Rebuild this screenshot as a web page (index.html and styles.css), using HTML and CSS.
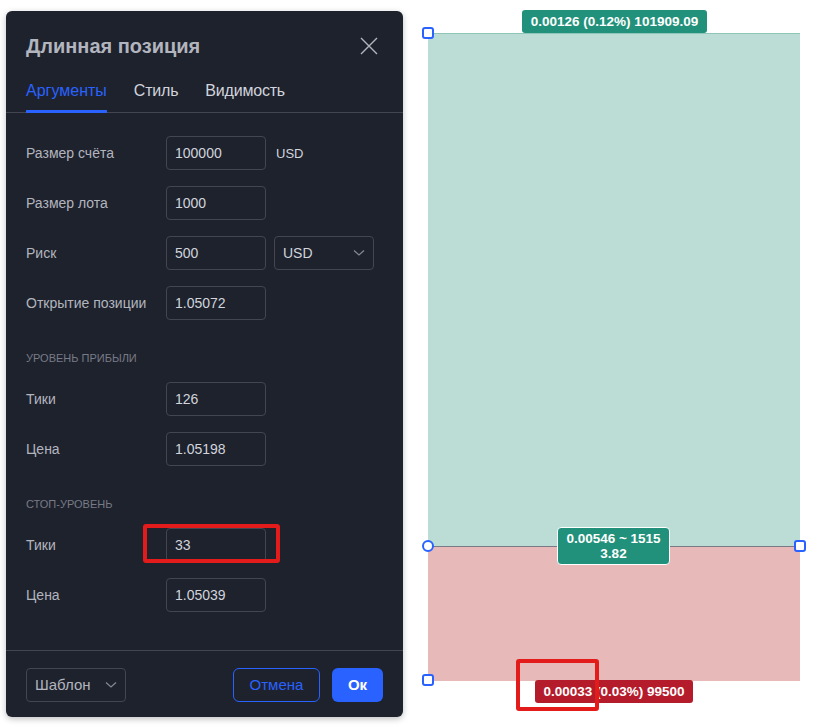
FILE: index.html
```html
<!DOCTYPE html>
<html lang="ru">
<head>
<meta charset="utf-8">
<title>Длинная позиция</title>
<link rel="stylesheet" href="styles.css">
</head>
<body>
<div class="dialog">
  <div class="header">
    <div class="title">Длинная позиция</div>
    <svg class="close" width="18" height="18" viewBox="0 0 18 18"><path d="M1 1L17 17M17 1L1 17" stroke="#b2b5be" stroke-width="1.4" fill="none"/></svg>
  </div>
  <div class="tabs">
    <div class="tab active">Аргументы</div>
    <div class="tab">Стиль</div>
    <div class="tab">Видимость</div>
  </div>
  <div class="body">
    <div class="row"><div class="label">Размер счёта</div><div class="input">100000</div><div class="unit">USD</div></div>
    <div class="row"><div class="label">Размер лота</div><div class="input">1000</div></div>
    <div class="row"><div class="label">Риск</div><div class="input">500</div>
      <div class="select">USD<svg width="12" height="8" viewBox="0 0 12 8"><path d="M1 1.5L6 6L11 1.5" stroke="#868993" stroke-width="1.2" fill="none"/></svg></div></div>
    <div class="row"><div class="label">Открытие позиции</div><div class="input">1.05072</div></div>
    <div class="section">Уровень прибыли</div>
    <div class="row"><div class="label">Тики</div><div class="input">126</div></div>
    <div class="row"><div class="label">Цена</div><div class="input">1.05198</div></div>
    <div class="section">Стоп-уровень</div>
    <div class="row"><div class="label">Тики</div><div class="input hl-wrap">33<span class="highlight hl-input"></span></div></div>
    <div class="row"><div class="label">Цена</div><div class="input">1.05039</div></div>
  </div>
  <div class="footer">
    <div class="select template">Шаблон<svg width="12" height="8" viewBox="0 0 12 8"><path d="M1 1.5L6 6L11 1.5" stroke="#868993" stroke-width="1.2" fill="none"/></svg></div>
    <div class="spacer"></div>
    <div class="btn cancel">Отмена</div>
    <div class="btn ok">Ок</div>
  </div>
</div>
<div class="chart">
  <div class="zone profit"></div>
  <div class="zone loss"></div>
  <div class="tag tag-top">0.00126 (0.12%) 101909.09</div>
  <div class="tag tag-mid">0.00546 ~ 1515<br>3.82</div>
  <div class="tag tag-bottom">0.00033 (0.03%) 99500</div>
  <div class="handle sq h-top"></div>
  <div class="handle circ h-mid"></div>
  <div class="handle sq h-right"></div>
  <div class="handle sq h-bottom"></div>
  <div class="highlight hl-chart"></div>
</div>
</body>
</html>
```
FILE: styles.css
```css
* { box-sizing: border-box; }
html, body { margin: 0; padding: 0; background: #ffffff; }
body {
  display: flex;
  align-items: flex-start;
  width: 817px;
  height: 727px;
  overflow: hidden;
  font-family: "Liberation Sans", Arial, sans-serif;
}
.dialog {
  margin: 11px 0 0 6px;
  width: 397px;
  height: 706px;
  background: #1e222d;
  border-radius: 6px;
  box-shadow: 0 2px 6px rgba(0,0,0,0.25);
  display: flex;
  flex-direction: column;
}
.header {
  display: flex;
  align-items: center;
  justify-content: space-between;
  padding: 20px 25px 13px 20px;
  height: 62px;
}
.title {
  font-size: 20px;
  font-weight: bold;
  color: #b2b5be;
  line-height: 28px;
}
.close { display: block; }
.tabs {
  display: flex;
  height: 40px;
  padding-left: 20px;
  border-bottom: 1px solid #434651;
  gap: 27px;
}
.tab {
  position: relative;
  padding-top: 8px;
  line-height: 20px;
  font-size: 16px;
  color: #d1d4dc;
}
.tab + .tab { letter-spacing: -0.2px; }
.tab.active { color: #2962ff; }
.tab.active::after {
  content: "";
  position: absolute;
  left: 0; right: 0; bottom: -1px;
  height: 3px;
  background: #2962ff;
}
.body {
  flex: 1;
  padding: 23px 20px 0 20px;
  display: flex;
  flex-direction: column;
}
.row {
  display: flex;
  align-items: center;
  height: 34px;
  margin-bottom: 16px;
}
.label {
  width: 140px;
  font-size: 14px;
  color: #b2b5be;
}
.input {
  width: 100px;
  height: 34px;
  border: 1px solid #434651;
  border-radius: 4px;
  padding-left: 8px;
  display: flex;
  align-items: center;
  font-size: 14px;
  color: #d1d4dc;
}
.hl-wrap { position: relative; }
.unit {
  margin-left: 10px;
  font-size: 13px;
  color: #d1d4dc;
}
.select {
  margin-left: 8px;
  width: 100px;
  height: 34px;
  border: 1px solid #434651;
  border-radius: 4px;
  padding: 0 8px 0 8px;
  display: flex;
  align-items: center;
  justify-content: space-between;
  font-size: 14px;
  color: #d1d4dc;
}
.section {
  margin-top: 14px;
  margin-bottom: 16px;
  line-height: 16px;
  font-size: 11px;
  color: #787b86;
  text-transform: uppercase;
}
.footer {
  height: 67px;
  border-top: 1px solid #434651;
  display: flex;
  align-items: center;
  padding: 0 20px;
  padding-top: 1px;
}
.select.template {
  margin-left: 0;
  color: #b2b5be;
  font-size: 15px;
}
.spacer { flex: 1; }
.btn {
  height: 34px;
  border-radius: 6px;
  display: flex;
  align-items: center;
  justify-content: center;
  font-size: 15px;
}
.cancel {
  width: 87px;
  border: 1px solid #2962ff;
  color: #2962ff;
  margin-right: 12px;
}
.ok {
  width: 51px;
  background: #2962ff;
  color: #ffffff;
  font-weight: bold;
}
.chart {
  position: relative;
  margin-left: 7px;
  width: 407px;
  height: 727px;
}
.zone { position: absolute; left: 18px; width: 372px; }
.profit {
  top: 33px;
  height: 513px;
  background: #bcdcd6;
  border-top: 1px solid #8fc4b8;
}
.loss {
  top: 546px;
  height: 135px;
  background: #e8b9b9;
  border-top: 1px solid #787b86;
}
.tag {
  position: absolute;
  color: #ffffff;
  font-weight: bold;
  font-size: 13.5px;
  text-align: center;
  border-radius: 3px;
}
.tag-top {
  left: 112px; top: 10px;
  width: 185px; height: 23px;
  line-height: 23px;
  background: #22917b;
}
.tag-mid {
  left: 147px; top: 527px;
  width: 113px; height: 38px;
  line-height: 15px;
  padding-top: 3px;
  background: #22917b;
  border: 1px solid #ffffff;
  border-radius: 4px;
}
.tag-bottom {
  left: 125px; top: 680px;
  width: 158px; height: 23px;
  line-height: 23px;
  background: #b51c2b;
}
.handle {
  position: absolute;
  width: 12px; height: 12px;
  border: 2px solid #2962ff;
  background: #ffffff;
}
.sq { border-radius: 3px; }
.circ { border-radius: 50%; }
.h-top { left: 12px; top: 27px; }
.h-mid { left: 12px; top: 540px; }
.h-right { left: 384px; top: 540px; }
.h-bottom { left: 12px; top: 674px; }
.highlight {
  position: absolute;
  border: 4px solid #e31b1b;
  border-radius: 3px;
}
.hl-input {
  left: -24px; top: -5px;
  width: 137px; height: 39px;
}
.hl-chart {
  left: 106px; top: 659px;
  width: 83px; height: 52px;
}
```
